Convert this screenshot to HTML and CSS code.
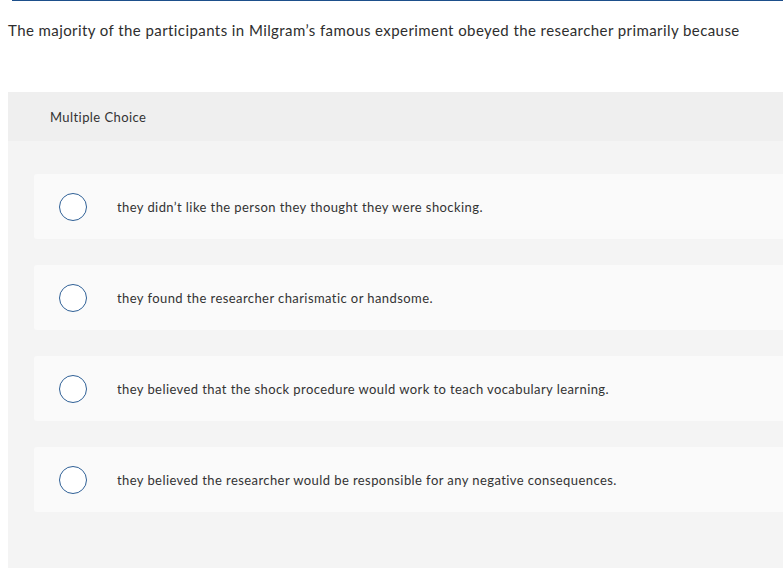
FILE: index.html
```html
<!DOCTYPE html>
<html>
<head>
<meta charset="utf-8">
<link rel="stylesheet" href="styles.css">
</head>
<body>
<div class="page">
  <div class="topline"></div>
  <p class="prompt">The majority of the participants in Milgram’s famous experiment obeyed the researcher primarily because</p>
  <section class="panel">
    <div class="panel-head">Multiple Choice</div>
    <div class="options">
      <div class="option"><span class="radio"></span><span class="label">they didn’t like the person they thought they were shocking.</span></div>
      <div class="option"><span class="radio"></span><span class="label">they found the researcher charismatic or handsome.</span></div>
      <div class="option"><span class="radio"></span><span class="label">they believed that the shock procedure would work to teach vocabulary learning.</span></div>
      <div class="option"><span class="radio"></span><span class="label">they believed the researcher would be responsible for any negative consequences.</span></div>
    </div>
  </section>
</div>
</body>
</html>
```
FILE: styles.css
```css
html, body {
  margin: 0;
  padding: 0;
  background: #ffffff;
  overflow: hidden;
}
.page {
  padding-left: 8px;
  font-family: Lato, "Open Sans", sans-serif;
  color: #333333;
  letter-spacing: 0.42px;
}
.topline {
  margin-left: 4px;
  height: 1px;
  background: #1d4f8b;
}
.prompt {
  margin: 0;
  padding-top: 19px;
  font-size: 15px;
  line-height: 20px;
  height: 72px;
  color: #2e2e2e;
}
.panel {
  background: #f4f4f4;
  height: 476px;
}
.panel-head {
  background: #efefef;
  height: 49px;
  box-sizing: border-box;
  padding-left: 42px;
  display: flex;
  align-items: center;
  font-size: 13px;
}
.options {
  padding: 33px 0 0 26px;
  display: flex;
  flex-direction: column;
  gap: 26px;
}
.option {
  background: #fafafa;
  border-radius: 3px 0 0 3px;
  height: 65px;
  display: flex;
  align-items: center;
  padding-left: 25px;
}
.radio {
  width: 28px;
  height: 28px;
  box-sizing: border-box;
  border: 1.5px solid #2f6096;
  border-radius: 50%;
  background: #ffffff;
  flex: none;
}
.label {
  margin-left: 30px;
  font-size: 13px;
}
```
